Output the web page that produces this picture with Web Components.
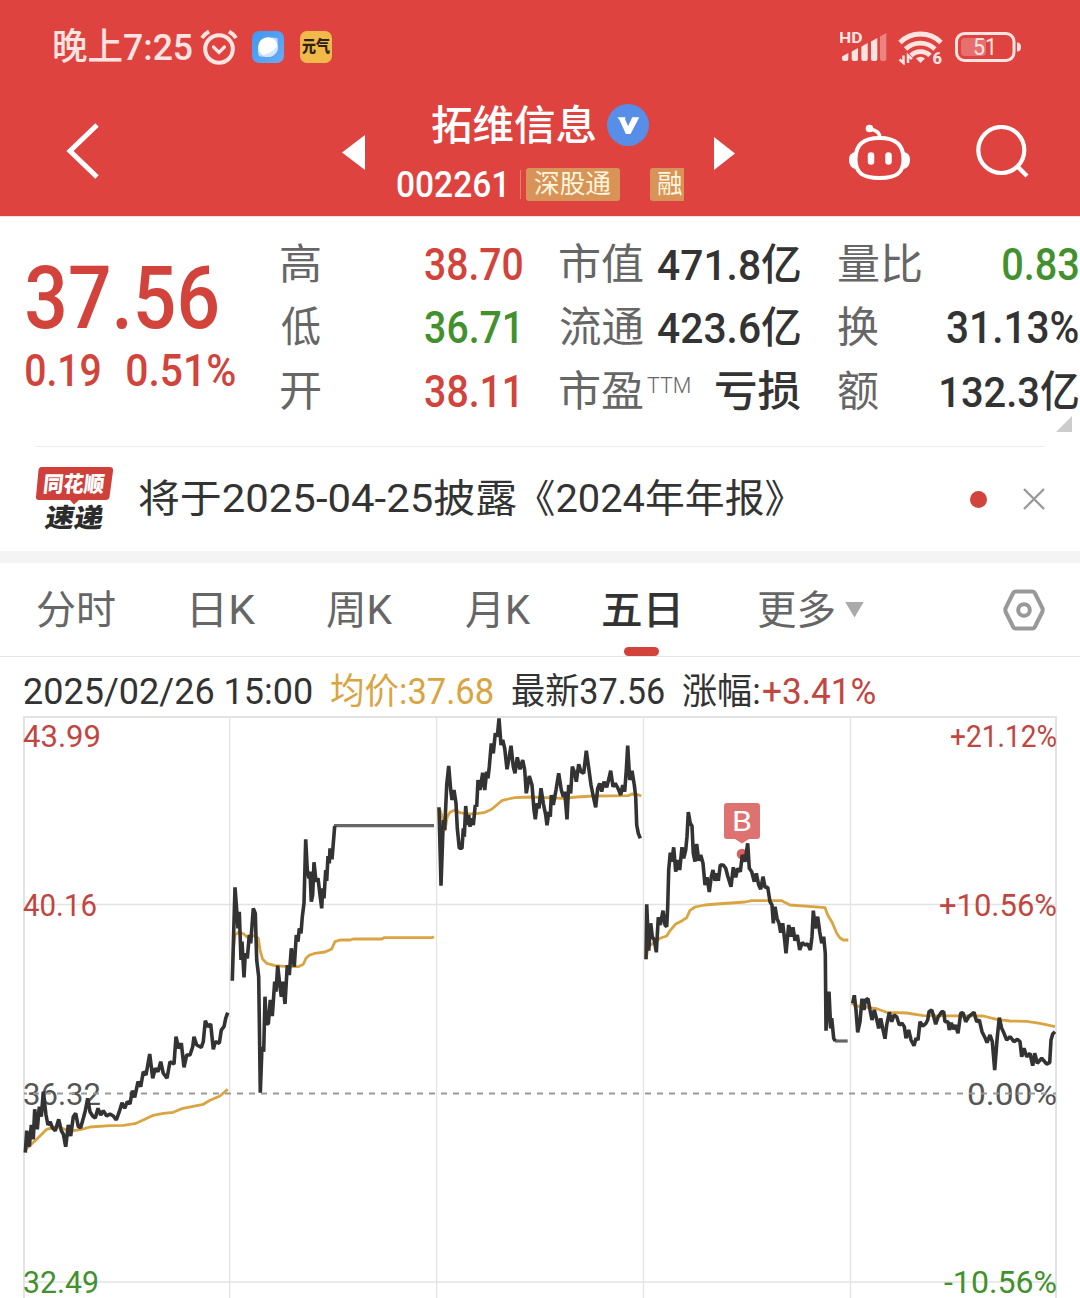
<!DOCTYPE html>
<html lang="zh-CN">
<head>
<meta charset="utf-8">
<title>拓维信息 002261</title>
<style>
  html, body { margin: 0; padding: 0; }
  body {
    width: 1080px;
    height: 1298px;
    overflow: hidden;
    background: #fff;
    color: #333;
    font-family: Roboto, "Noto Sans CJK SC", sans-serif;
    --red: #d1433b;
    --green: #43902e;
    --bar: #de4340;
    --muted: #666;
    --gold: #d9a441;
  }
</style>
</head>
<body>
<stock-page></stock-page>

<script>
// ---------------------------------------------------------------------------
// Base
// ---------------------------------------------------------------------------

/** Renders css() and template() once into an open shadow root. */
class BaseComponent extends HTMLElement {
  constructor() {
    super();
    this.attachShadow({ mode: 'open' });
  }

  connectedCallback() {
    this.shadowRoot.innerHTML = `<style>${this.css()}</style>${this.template()}`;
  }

  css() { return ''; }

  template() { return ''; }
}

/**
 * One line of text whose ink is fitted to a given width.
 *   w    - ink width in px
 *   size - font size in px
 *   h    - line box height in px
 */
class FitText extends BaseComponent {
  css() {
    return `
      :host { display: block; flex: none; white-space: pre; }
      span { display: inline-block; transform-origin: 0 50%; }
    `;
  }

  template() {
    return '<span><slot></slot></span>';
  }

  connectedCallback() {
    super.connectedCallback();
    const w = Number(this.getAttribute('w'));
    const h = this.getAttribute('h') ?? '48';
    this.style.width = `${w}px`;
    this.style.height = `${h}px`;
    this.style.lineHeight = `${h}px`;
    this.style.fontSize = `${this.getAttribute('size')}px`;
    if (this.hasAttribute('weight')) this.style.fontWeight = this.getAttribute('weight');

    const cs = getComputedStyle(this);
    const ctx = document.createElement('canvas').getContext('2d');
    ctx.font = `${cs.fontStyle} ${cs.fontWeight} ${cs.fontSize} ${cs.fontFamily}`;
    const m = ctx.measureText(this.textContent);
    const k = w / (m.actualBoundingBoxLeft + m.actualBoundingBoxRight);
    this.shadowRoot.querySelector('span').style.transform =
      `translateX(${m.actualBoundingBoxLeft * k}px) scaleX(${k})`;
  }
}

// ---------------------------------------------------------------------------
// Status bar
// ---------------------------------------------------------------------------

class StatusBar extends BaseComponent {
  css() {
    return `
      :host { display: flex; align-items: center; height: 94px; padding: 0 59px 0 54px;
              box-sizing: border-box; color: #ffe4e2; }
      svg { display: block; flex: none; }
      .time { margin-top: 2px; }
      .alarm { margin-left: 8px; }
      .app { display: flex; align-items: center; justify-content: center;
             width: 32px; height: 32px; border-radius: 7px; margin-left: 14px; }
      .blue { background: linear-gradient(135deg, #3f97ee, #6aaaf5); }
      .gold { background: #f1b84a; color: #2c2410; margin-left: 16px; }
      .right { display: flex; align-items: center; margin-left: auto; }
    `;
  }

  template() {
    return `
      <fit-text class="time" w="138" size="37" h="46" weight="500">晚上7:25</fit-text>
      <svg class="alarm" width="38" height="36" viewBox="0 0 38 36" fill="none"
           stroke="currentColor" stroke-width="4">
        <circle cx="19" cy="20" r="13.800"/>
        <path d="M2 9Q4.500 5 9 2.500M36 9Q33.500 5 29 2.500"/>
        <path d="M13.500 18l5.500 5.500 5.500-5.500" stroke-width="3.200" stroke-linecap="round"/>
      </svg>
      <div class="app blue">
        <svg width="22" height="22" viewBox="0 0 22 22">
          <path d="M2 20C0 17 .8 5.500 5.500 3S18 1.500 20.500 2c.5 3 .3 13-3.500 16S5 21.500 2 20z" fill="#b4dcfc"/>
          <circle cx="11" cy="11" r="9.800" fill="#fff"/>
          <path d="M20.600 9C18 14 12 18 5.500 19.200A9.800 9.800 0 0 0 20.600 9z" fill="#d4e6fb"/>
        </svg>
      </div>
      <div class="app gold"><fit-text w="28" size="16" h="32" weight="900">元气</fit-text></div>
      <div class="right">
        <svg width="48" height="34" viewBox="0 0 48 34" fill="currentColor">
          <text x="-1" y="12.500" font-size="15" font-weight="700" textLength="23.500"
                lengthAdjust="spacingAndGlyphs">HD</text>
          <path d="M2 26.500l6.300-3.500v6q0 2-2 2H4q-2 0-2-2z"/>
          <path d="M11.700 21.500L18 18v11q0 2-2 2h-2.300q-2 0-2-2z"/>
          <path d="M21.400 16.500l6.300-3.500v16q0 2-2 2h-2.300q-2 0-2-2z"/>
          <path d="M31 11.500L37.300 8v21q0 2-2 2H33q-2 0-2-2z"/>
          <path d="M40 6.500L46.300 3v26q0 2-2 2H42q-2 0-2-2z" opacity=".4"/>
        </svg>
        <svg style="margin-left:10px" width="46" height="36" viewBox="0 0 46 36" fill="none"
             stroke="currentColor" stroke-width="4.800">
          <path d="M2 13.500a29 29 0 0 1 41 0M7.500 20a21.500 21.500 0 0 1 29.500 0M13 26.500a13.500 13.500 0 0 1 19 0"/>
          <path d="M18 29.500q4.500-3.500 9 0L22.500 34z" fill="currentColor" stroke="none"/>
          <path d="M5.500 26.500V34l-4-3.500M10 34v-7.500l4 3.500" stroke-width="2.500"/>
          <circle cx="39.500" cy="30" r="7" fill="#de4340" stroke="none"/>
          <text x="34.500" y="34.500" font-size="16.500" font-weight="800" fill="currentColor" stroke="none">6</text>
        </svg>
        <svg style="margin-left:11px" width="66" height="32" viewBox="0 0 66 32">
          <rect x="1.500" y="2.500" width="57.500" height="27" rx="8" fill="none" stroke="currentColor" stroke-width="3"/>
          <rect x="6" y="7" width="25" height="18" rx="4" fill="currentColor" opacity=".28"/>
          <path d="M62 11.500q4 0 4 4.500t-4 4.500z" fill="currentColor"/>
          <text x="18" y="24.300" font-size="23" fill="currentColor"
                textLength="24" lengthAdjust="spacingAndGlyphs">51</text>
        </svg>
      </div>
    `;
  }
}

// ---------------------------------------------------------------------------
// Title bar
// ---------------------------------------------------------------------------

class StockTag extends BaseComponent {
  css() {
    return `
      :host { display: block; height: 33px; box-sizing: border-box; padding-left: 8px;
              background: #d79358; color: #fff6dc; border-radius: 3px; overflow: hidden; }
    `;
  }

  template() { return '<slot></slot>'; }
}

class TitleBar extends BaseComponent {
  css() {
    return `
      :host { display: grid; height: 122px; color: #fff;
              grid-template-columns: 342px 54px 318px 135px 127px 1fr; }
      svg { display: block; }
      .back { padding: 29px 0 0 66px; }
      .prev { padding-top: 41px; }
      .next { padding-top: 43px; }
      .name { display: flex; align-items: center; height: 62px; padding-left: 36px; gap: 12px; }
      .name fit-text { margin-top: 2px; }
      .code { display: flex; align-items: center; height: 56px; }
      .num { margin: 2px 4px 0 1px; }
      .code i { width: 1px; height: 29px; background: #ea7d6c; margin: 0 5px 0 12px; }
      .bot { padding-top: 30px; }
      .find { padding-top: 31px; }
      .cut { width: 34px; border-radius: 3px 0 0 3px; margin-left: 30px; }
    `;
  }

  template() {
    return `
      <div class="back">
        <svg width="34" height="56" viewBox="0 0 34 56" fill="none" stroke="#fff" stroke-width="5">
          <path d="M31 2L4 28l27 26"/></svg>
      </div>
      <div class="prev"><svg width="23" height="35" viewBox="0 0 23 35"><path d="M23 0v35L0 17.500z" fill="#fff"/></svg></div>
      <div class="mid">
        <div class="name">
          <fit-text w="163" size="41" h="56" weight="500">拓维信息</fit-text>
          <svg width="42" height="42" viewBox="0 0 42 42">
            <circle cx="21" cy="21" r="21" fill="#578ee8"/>
            <path d="M10.500 13.200h8l-.4 2.200 3 6.600 4.200-8.800h7L23.500 30h-4.600L12.500 16z" fill="#fff"/>
          </svg>
        </div>
        <div class="code">
          <fit-text class="num" w="107" size="36.500" h="40" weight="500">002261</fit-text>
          <i></i>
          <stock-tag style="width:94px"><fit-text w="77" size="26" h="33">深股通</fit-text></stock-tag>
          <stock-tag class="cut"><fit-text w="24.500" size="26" h="33">融</fit-text></stock-tag>
        </div>
      </div>
      <div class="next"><svg width="21" height="33" viewBox="0 0 21 33"><path d="M0 0v33l21-16.500z" fill="#fff"/></svg></div>
      <div class="bot">
        <svg width="61" height="57" viewBox="0 0 61 57" fill="none" stroke="#fff" stroke-width="4">
          <path d="M30.500 14C15 14 6.500 20 6.500 35c0 14 7 19 24 19s24-5 24-19c0-15-8.500-21-24-21z"/>
          <path d="M31 14c0-5-4-8-10-9" stroke-width="3.500"/>
          <circle cx="20.500" cy="4.500" r="3.800" fill="#fff" stroke="none"/>
          <path d="M6 28q-6 1-6 8t6 9zM55 28q6 1 6 8t-6 9z" fill="#fff" stroke="none"/>
          <path d="M22 31.500v6M39.500 31.500v6" stroke-width="6.500" stroke-linecap="round"/>
        </svg>
      </div>
      <div class="find">
        <svg width="53" height="54" viewBox="0 0 53 54" fill="none" stroke="#fff" stroke-width="4.200">
          <circle cx="25.300" cy="25" r="23"/><path d="M41.500 41.500l9.500 9.500"/>
        </svg>
      </div>
    `;
  }
}

// ---------------------------------------------------------------------------
// Quote panel
// ---------------------------------------------------------------------------

class QuotePanel extends BaseComponent {
  css() {
    return `
      :host { display: grid; grid-template-columns: 281px 279px 278px 242px; height: 230px;
              position: relative; box-sizing: border-box; border-top: 1px solid #fbe0dc; }
      .last { padding: 31px 0 0 27px; color: var(--red); }
      .diff { display: flex; gap: 27px; margin: 0 0 0 -1px; }
      .col { display: grid; grid-template-rows: repeat(3, 63.5px); padding-top: 16px; align-content: start; }
      .row { display: flex; align-items: center; justify-content: space-between; }
      .c1 { padding-right: 38px; }
      .c2 { padding-right: 38px; }
      .c3 { padding-right: 2px; }
      .k { color: var(--muted); }
      .one { margin-right: 5px; }
      .pe { display: flex; gap: 4px; color: var(--muted); }
      .up { color: var(--red); }
      .down { color: var(--green); }
      .more { position: absolute; right: 8px; bottom: 14px; width: 16px; height: 16px;
              background: #ccc; clip-path: polygon(100% 0, 100% 100%, 0 100%); }
    `;
  }

  template() {
    return `
      <div class="last">
        <fit-text w="190" size="87" h="100" weight="500">37.56</fit-text>
        <div class="diff">
          <fit-text w="74" size="44" h="46" weight="500">0.19</fit-text>
          <fit-text w="108" size="44" h="46" weight="500">0.51%</fit-text>
        </div>
      </div>
      <div class="col c1">
        <div class="row"><fit-text class="k" w="39" size="42">高</fit-text><fit-text class="up" w="97" size="44" weight="500">38.70</fit-text></div>
        <div class="row"><fit-text class="k" w="39" size="42">低</fit-text><fit-text class="down one" w="92" size="44" weight="500">36.71</fit-text></div>
        <div class="row"><fit-text class="k" w="39" size="42">开</fit-text><fit-text class="up one" w="92" size="44" weight="500">38.11</fit-text></div>
      </div>
      <div class="col c2">
        <div class="row"><fit-text class="k" w="83" size="42">市值</fit-text><fit-text w="142" size="43" weight="500">471.8亿</fit-text></div>
        <div class="row"><fit-text class="k" w="83" size="42">流通</fit-text><fit-text w="142" size="43" weight="500">423.6亿</fit-text></div>
        <div class="row"><span class="pe"><fit-text w="83" size="42">市盈</fit-text><fit-text w="43" size="22.500" h="35" weight="300">TTM</fit-text></span><fit-text w="84" size="42" weight="500">亏损</fit-text></div>
      </div>
      <div class="col c3">
        <div class="row"><fit-text class="k" w="83" size="42">量比</fit-text><fit-text class="down" w="75" size="44" weight="500">0.83</fit-text></div>
        <div class="row"><fit-text class="k" w="40" size="42">换</fit-text><fit-text w="131" size="44" weight="500">31.13%</fit-text></div>
        <div class="row"><fit-text class="k" w="40" size="42">额</fit-text><fit-text w="137" size="43" weight="500">132.3亿</fit-text></div>
      </div>
      <div class="more"></div>
    `;
  }
}

// ---------------------------------------------------------------------------
// Notice
// ---------------------------------------------------------------------------

class NoticeBar extends BaseComponent {
  css() {
    return `
      :host { display: flex; align-items: center; height: 104px; margin: 0 35px;
              border-top: 1px solid #ececec; }
      .logo { width: 78px; height: 66px; display: block; }
      .msg { display: flex; gap: 20px; margin-left: 26px; }
      .dot { width: 17px; height: 17px; border-radius: 50%; background: var(--red); margin-left: auto; }
      .close { margin: 0 0 0 36px; }
    `;
  }

  template() {
    return `
      <svg class="logo" viewBox="0 0 78 66">
        <path d="M6.500 1h68q4 0 3.500 4l-3.500 26q-.5 3-4 3H44l-5 4.500-4-4.500H4q-3.500 0-3-3.500L3.500 4q.5-3 3-3z" fill="#cf403b"/>
        <text transform="translate(7.500 26) skewX(-6)" font-size="22" font-weight="900" fill="#fff"
              textLength="61" lengthAdjust="spacingAndGlyphs">同花顺</text>
        <text transform="translate(9 61) skewX(-10)" font-size="26" font-weight="900" fill="#2c2c2c"
              textLength="58" lengthAdjust="spacingAndGlyphs">速递</text>
      </svg>
      <div class="msg">
        <fit-text w="377" size="39">将于2025-04-25披露</fit-text>
        <fit-text w="248" size="39">《2024年年报》</fit-text>
      </div>
      <span class="dot"></span>
      <svg class="close" width="22" height="22" viewBox="0 0 22 22" stroke="#999" stroke-width="2.400">
        <path d="M1 1l20 20M21 1L1 21"/>
      </svg>
    `;
  }
}

// ---------------------------------------------------------------------------
// Period tabs
// ---------------------------------------------------------------------------

class PeriodTabs extends BaseComponent {
  css() {
    return `
      :host { display: grid; height: 106px; box-sizing: border-box;
              grid-template-columns: 155px 135px 139px 137px 155px 245px 1fr;
              padding-left: 37px; border-top: 12px solid #f4f4f4;
              border-bottom: 1px solid #e4e4e4; color: var(--muted); }
      div { height: 93px; display: flex; align-items: center; }
      fit-text { margin-top: 2px; }
      .on { position: relative; color: #333; }
      .on::after { content: ""; position: absolute; left: 21px; bottom: 0; width: 35px;
                   height: 9px; border-radius: 5px; background: var(--red); }
      .arrow { width: 19px; height: 16px; margin-left: 11px; background: #aaa;
               clip-path: polygon(0 0, 100% 0, 50% 100%); }
    `;
  }

  template() {
    return `
      <div><fit-text w="78" size="40">分时</fit-text></div>
      <div style="padding-left:1px"><fit-text w="63" size="40">日K</fit-text></div>
      <div><fit-text w="66" size="40">周K</fit-text></div>
      <div><fit-text w="65" size="40">月K</fit-text></div>
      <div class="on"><fit-text w="75" size="40" weight="500">五日</fit-text></div>
      <div><fit-text w="76" size="40">更多</fit-text><i class="arrow"></i></div>
      <div>
        <svg width="42" height="42" viewBox="0 0 42 42" fill="none" stroke="#999" stroke-width="4" stroke-linejoin="round">
          <path d="M12.500 2.500h17q1.500 0 2.300 1.500l7.500 15q.8 2 0 4l-7.500 15q-.8 1.500-2.300 1.500h-17q-1.500 0-2.300-1.500L2.700 23q-.8-2 0-4l7.500-15q.8-1.500 2.300-1.500z"/>
          <circle cx="21" cy="21" r="5.800"/>
        </svg>
      </div>
    `;
  }
}

// ---------------------------------------------------------------------------
// Five day chart
// ---------------------------------------------------------------------------

// Each session: origin in chart px, then x,y pairs in thirds of a pixel.
const SESSIONS = [
  {
    origin: [10, 860],
    price: '46,878 50,812 58,860 64,795 70,838 74,748 82,808 88,740 94,770 100,695 108,765 114,795 120,785 128,805 136,812 146,778 154,812 160,822 167,860 175,795 182,828 190,770 197,760 205,800 212,803 220,775 226,752 233,715 240,755 248,768 256,774 264,745 272,765 280,752 290,768 300,762 310,768 319,780 328,755 336,728 344,745 352,725 360,732 367,692 374,712 384,665 392,680 400,635 408,645 419,582 424,620 428,655 436,625 444,635 452,605 460,640 471,655 480,605 492,612 498,530 506,565 514,550 522,622 530,585 540,585 548,560 552,530 560,555 574,562 580,545 586,482 594,500 602,492 606,530 610,568 616,545 628,550 634,510 642,500 647,475 653,458',
    avg: '48,868 80,838 110,808 140,800 165,808 190,812 215,808 240,801 300,797 340,796 375,791 400,780 430,766 460,760 490,757 515,746 545,740 580,733 600,721 630,708 653,688',
  },
  {
    origin: [220, 800],
    price: '37,542 45,262 50,330 54,385 58,335 63,480 66,425 72,532 76,460 82,475 88,405 92,430 100,325 106,340 110,480 116,530 121,878 126,740 131,755 135,590 139,670 145,672 151,600 157,648 164,545 168,575 173,497 180,560 184,590 188,545 195,612 202,495 208,525 214,445 223,500 229,405 234,425 238,385 243,400 247,350 252,310 257,118 262,210 267,235 270,215 274,305 278,285 282,187 288,245 294,235 300,285 305,325 308,265 312,295 317,210 320,243 324,168 328,190 330,145 336,178 340,130 344,78',
    flat: '342,77 642,77',
    avg: '37,535 40,450 45,405 58,395 72,403 82,412 90,407 105,408 115,415 120,450 128,478 140,490 165,497 195,499 235,500 250,493 258,475 268,466 285,460 315,456 335,447 345,425 360,420 390,420 400,417 485,417 492,413 635,413 642,410',
  },
  {
    origin: [430, 700],
    price: '27,322 33,557 40,360 44,390 50,255 56,198 62,270 66,300 72,270 78,310 82,385 88,445 96,445 100,385 103,410 107,318 112,375 116,345 120,380 124,355 130,375 136,315 140,320 144,240 150,270 158,218 164,270 170,215 174,235 178,200 184,130 190,160 196,100 202,110 207,55 213,135 218,120 224,145 231,208 237,175 243,137 250,200 255,220 262,172 270,208 278,180 284,210 289,280 298,228 306,255 312,330 316,358 322,310 327,325 333,265 340,310 347,345 351,376 357,335 361,350 364,285 370,315 378,270 386,220 394,270 400,290 404,275 411,358 416,255 422,280 427,200 433,215 439,245 446,193 453,215 461,220 469,152 477,210 483,255 489,285 497,322 503,265 509,250 515,275 522,245 530,262 537,235 542,212 549,260 556,250 564,265 572,285 578,255 584,275 589,210 593,137 599,240 606,212 613,255 617,290 620,375 625,400 631,415',
    avg: '30,330 35,345 45,390 52,350 60,337 75,330 90,338 110,342 140,341 165,337 185,328 200,315 215,302 235,297 255,293 300,291 400,295 440,291 490,288 595,287 605,282 620,283 634,288',
  },
  {
    origin: [635, 790],
    price: '33,508 35,343 41,482 47,400 52,440 58,450 64,487 70,382 76,405 84,362 90,405 95,410 98,350 101,240 106,188 110,215 116,172 122,245 128,210 134,240 141,172 146,205 152,180 156,140 160,66 166,100 171,108 175,190 180,215 185,162 191,212 197,195 204,220 210,285 216,262 223,306 229,260 234,240 240,272 246,250 250,272 256,225 265,225 272,235 278,258 288,290 295,232 302,262 308,235 316,245 322,195 330,215 338,160 343,235 350,245 358,275 364,250 371,285 377,298 384,260 390,292 398,292 405,335 411,345 415,400 420,350 426,385 432,400 437,428 443,400 448,440 453,490 461,405 468,440 474,412 480,452 487,435 494,480 502,458 510,465 518,462 526,480 531,440 535,362 541,415 548,380 554,425 560,460 566,440 571,490 573,722 582,605 587,715 590,685 596,745 601,753',
    flat: '600,753 638,753',
    avg: '33,508 40,470 75,445 95,438 105,422 122,402 140,393 155,383 165,361 180,351 210,345 245,342 330,336 350,332 440,332 465,345 530,350 570,353 578,375 592,398 605,430 615,444 625,450 640,450',
  },
  {
    origin: [840, 960],
    price: '38,130 43,106 48,150 53,217 60,185 66,116 72,150 76,120 84,116 90,150 96,180 103,150 110,178 116,205 122,175 128,205 135,236 140,195 148,157 155,185 162,165 170,170 178,195 186,190 193,200 198,235 206,210 213,240 222,257 228,235 234,240 240,185 248,198 258,190 263,180 267,155 275,150 280,165 287,193 294,172 305,155 311,155 315,185 324,185 328,210 334,188 340,208 346,195 354,220 362,160 369,158 377,185 386,170 402,157 410,185 418,180 426,215 436,235 441,248 450,225 457,245 464,330 471,240 478,173 485,205 492,220 500,240 510,230 522,245 532,238 540,245 545,290 552,265 560,290 570,280 578,317 584,280 592,310 605,295 620,312 629,308 633,240 638,222 645,215',
    avg: '35,130 50,138 110,146 140,157 200,159 250,167 430,168 470,178 510,183 560,184 600,190 645,200',
  },
];

// left edge / right edge labels: [text, y, ink width, colour]
const LEFT = [
  ['43.99', 747, 78, '#c0463f'],
  ['40.16', 916, 74, '#c0463f'],
  ['36.32', 1105, 78, '#555'],
  ['32.49', 1292.5, 76, '#43902e'],
];
const RIGHT = [
  ['+21.12%', 747, 107, '#c0463f'],
  ['+10.56%', 916, 118, '#c0463f'],
  ['0.00%', 1105, 90, '#555'],
  ['-10.56%', 1292.5, 113, '#43902e'],
];

class FiveDayChart extends BaseComponent {
  css() {
    return `
      :host { display: block; }
      .info { display: flex; align-items: center; height: 59px; padding: 10px 0 0 24px; box-sizing: border-box; }
      svg { display: block; }
      .grid { stroke: #e3e3e3; stroke-width: 2; fill: none; }
      .avg { stroke: var(--gold); stroke-width: 2.8; stroke-linejoin: round; fill: none; }
      .price { stroke: #333; stroke-width: 3.6; stroke-linejoin: bevel; fill: none; }
      .flat { stroke: #666; stroke-width: 3.2; }
      .info > * + * { margin-left: 19px; }
      .info > .rate { margin-left: 4px; color: #c0463f; }
      .mean { color: var(--gold); }
    `;
  }

  line(session, key) {
    if (!session[key]) return '';
    const [ox, oy] = session.origin;
    const pts = session[key].split(' ').map((p) => {
      const [x, y] = p.split(',').map(Number);
      return `${(ox + x / 3).toFixed(1)},${(oy + y / 3).toFixed(1)}`;
    });
    return `<polyline class="${key === 'avg' ? 'avg' : `price ${key}`}" points="${pts.join(' ')}"/>`;
  }

  label([text, y, w, fill], x) {
    return `<text x="${x}" y="${y}" font-size="31" fill="${fill}" textLength="${w}" lengthAdjust="spacingAndGlyphs">${text}</text>`;
  }

  template() {
    return `
      <div class="info">
        <fit-text w="288" size="36">2025/02/26 15:00</fit-text>
        <fit-text class="mean" w="162" size="36">均价:37.68</fit-text>
        <fit-text w="152" size="36">最新37.56</fit-text>
        <fit-text w="76" size="36">涨幅:</fit-text>
        <fit-text class="rate" w="112" size="36">+3.41%</fit-text>
      </div>
      <svg width="1080" height="582" viewBox="0 716 1080 582">
        <path class="grid" d="M23 717H1057M24 716V1298M1056 716V1298"/>
        <path class="grid" style="stroke-width:1.300" d="M24 904.500H1056M24 1282H1056M229.700 717V1298M436.600 717V1298M643.500 717V1298M850.500 717V1298"/>
        ${LEFT.map((l) => this.label(l, 23)).join('')}
        ${RIGHT.map((l) => this.label(l, 1057 - l[2])).join('')}
        <path d="M24 1093.500H1056" stroke="#999" stroke-width="1.800" stroke-dasharray="6 6" stroke-dashoffset="3"/>
        <circle cx="742" cy="854" r="5.300" fill="#d9605f"/>
        ${SESSIONS.map((s) => this.line(s, 'avg') + this.line(s, 'flat') + this.line(s, 'price')).join('')}
        <path d="M727 803h30q3 0 3 3v30q0 3-3 3h-8l-7 4.500-7-4.500h-8q-3 0-3-3v-30q0-3 3-3z" fill="#de7270"/>
        <text x="732" y="831" font-size="28" fill="#fff" textLength="20" lengthAdjust="spacingAndGlyphs">B</text>
      </svg>
    `;
  }
}

// ---------------------------------------------------------------------------
// Page
// ---------------------------------------------------------------------------

class StockPage extends BaseComponent {
  css() {
    return `
      :host { display: block; width: 1080px; height: 1298px; overflow: hidden; }
      header { background: var(--bar); height: 216px; }
    `;
  }

  template() {
    return `
      <header>
        <status-bar></status-bar>
        <title-bar></title-bar>
      </header>
      <quote-panel></quote-panel>
      <notice-bar></notice-bar>
      <period-tabs></period-tabs>
      <five-day-chart></five-day-chart>
    `;
  }
}

customElements.define('fit-text', FitText);
customElements.define('stock-tag', StockTag);
customElements.define('status-bar', StatusBar);
customElements.define('title-bar', TitleBar);
customElements.define('quote-panel', QuotePanel);
customElements.define('notice-bar', NoticeBar);
customElements.define('period-tabs', PeriodTabs);
customElements.define('five-day-chart', FiveDayChart);
customElements.define('stock-page', StockPage);
</script>
</body>
</html>
